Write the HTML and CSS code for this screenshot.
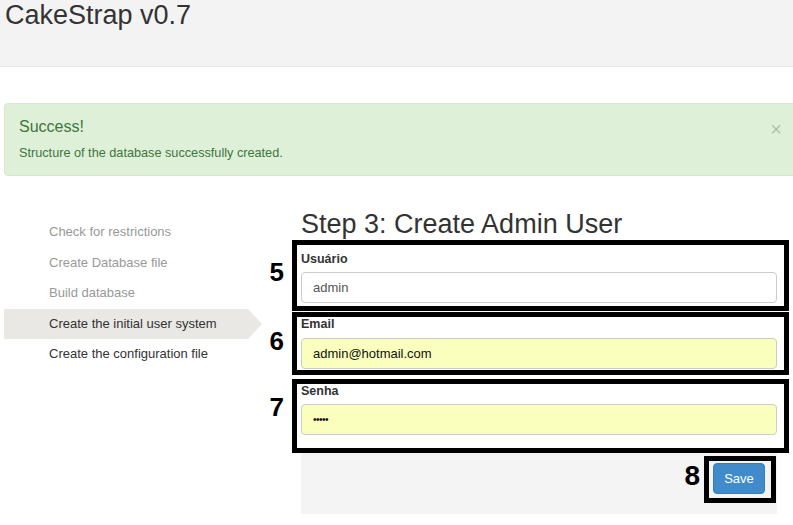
FILE: index.html
```html
<!DOCTYPE html>
<html>
<head>
<meta charset="utf-8">
<link rel="stylesheet" href="styles.css">
</head>
<body>
<header class="topbar">
  <h1 class="brand">CakeStrap v0.7</h1>
</header>

<div class="alert">
  <div class="alert-body">
    <h4 class="alert-title">Success!</h4>
    <p class="alert-text">Structure of the database successfully created.</p>
  </div>
  <span class="alert-close">×</span>
</div>

<div class="main">
  <ul class="steps">
    <li class="step done">Check for restrictions</li>
    <li class="step done">Create Database file</li>
    <li class="step done">Build database</li>
    <li class="step active">Create the initial user system</li>
    <li class="step">Create the configuration file</li>
  </ul>

  <div class="content">
    <h2 class="page-title">Step 3: Create Admin User</h2>

    <div class="mark mark-user">
      <span class="mark-num">5</span>
      <label class="field-label">Usuário</label>
      <input class="field-input" type="text" value="admin">
    </div>

    <div class="mark mark-email">
      <span class="mark-num num-6">6</span>
      <label class="field-label">Email</label>
      <input class="field-input autofill" type="text" value="admin@hotmail.com">
    </div>

    <div class="mark mark-pass">
      <span class="mark-num num-7">7</span>
      <label class="field-label">Senha</label>
      <input class="field-input autofill pass" type="password" value="admin">
    </div>

    <div class="actions">
      <div class="mark-btn">
        <span class="mark-num num-8">8</span>
        <button class="btn-save">Save</button>
      </div>
    </div>
  </div>
</div>
</body>
</html>
```

FILE: styles.css
```css
* { box-sizing: border-box; }
html, body { margin: 0; padding: 0; }
body {
  font-family: "Liberation Sans", Arial, sans-serif;
  color: #333;
  background: #fff;
  width: 793px;
  overflow: hidden;
}

.topbar {
  height: 67px;
  background: #f3f3f3;
  border-bottom: 1px solid #e7e7e7;
  padding-left: 5px;
}
.brand {
  margin: 0;
  font-weight: normal;
  font-size: 27px;
  line-height: 30px;
  color: #333;
}

.alert {
  margin: 36px -11px 0 4px;
  height: 73px;
  background: #dff0d8;
  border: 1px solid #d6e9c6;
  border-radius: 4px;
  padding: 13px 14px;
  display: flex;
  justify-content: space-between;
  color: #3c763d;
}
.alert-title {
  margin: 0;
  font-weight: normal;
  font-size: 16px;
  line-height: 20px;
}
.alert-text {
  margin: 7px 0 0;
  font-size: 12.7px;
  line-height: 18px;
}
.alert-close {
  font-size: 20px;
  line-height: 22px;
  color: #000;
  opacity: 0.2;
  margin-right: 7px;
  margin-top: 1px;
}

.main {
  display: flex;
  padding-left: 4px;
}

.steps {
  list-style: none;
  margin: 0;
  padding: 41px 0 0;
  width: 244px;
}
.step {
  position: relative;
  height: 30.5px;
  line-height: 30.5px;
  padding-left: 45px;
  font-size: 13px;
  color: #333;
}
.step.done { color: #999; }
.step.active { background: #e9e8e4; }
.step.active::after {
  content: "";
  position: absolute;
  left: 100%;
  top: 0;
  border-left: 14px solid #e9e8e4;
  border-top: 15.25px solid transparent;
  border-bottom: 15.25px solid transparent;
}

.content {
  width: 476px;
  margin-left: 53px;
  padding-top: 33px;
}
.page-title {
  margin: 0 0 1px;
  font-weight: normal;
  font-size: 27px;
  line-height: 30px;
  color: #333;
}

.mark {
  position: relative;
  border: 5px solid #000;
  background: #fff;
  margin-left: -9px;
  margin-right: -12px;
  padding-left: 4px;
  padding-right: 7px;
}
.mark-user { padding-top: 7px; padding-bottom: 3px; }
.mark-email { margin-top: 1px; padding-top: 0; padding-bottom: 1px; }
.mark-pass { margin-top: 4px; padding-top: 0; padding-bottom: 13px; }

.mark-num {
  position: absolute;
  right: calc(100% + 13px);
  top: 15px;
  font-size: 26px;
  line-height: 25px;
  font-weight: bold;
  color: #000;
}
.num-6 { top: 12px; }
.num-7 { top: 11px; }

.field-label {
  display: block;
  font-size: 12.5px;
  line-height: 14px;
  font-weight: bold;
  color: #333;
  margin-bottom: 6px;
}
.mark-email .field-label { margin-bottom: 7px; }

.field-input {
  display: block;
  width: 476px;
  height: 31px;
  border: 1px solid #ccc;
  border-radius: 4px;
  padding: 0 11px;
  font-family: "Liberation Sans", Arial, sans-serif;
  font-size: 13px;
  color: #555;
  background: #fff;
  outline: none;
}
.field-input.autofill {
  background: #faffbd;
  color: #111;
}
.field-input.pass {
  font-size: 10px;
  letter-spacing: -0.5px;
}

.actions {
  height: 61px;
  background: #f4f4f4;
  display: flex;
  justify-content: flex-end;
  align-items: flex-start;
  padding: 3px 1px 0 0;
}
.mark-btn {
  position: relative;
  border: 5px solid #000;
  padding: 2px 6px 4px 4px;
}
.num-8 {
  font-size: 28px;
  line-height: 28px;
  top: 1px;
  right: calc(100% + 9px);
}
.btn-save {
  display: block;
  width: 52px;
  height: 31px;
  background: #428bca;
  border: 1px solid #357ebd;
  border-radius: 4px;
  color: #fff;
  font-family: "Liberation Sans", Arial, sans-serif;
  font-size: 13px;
  padding: 0;
}
```
